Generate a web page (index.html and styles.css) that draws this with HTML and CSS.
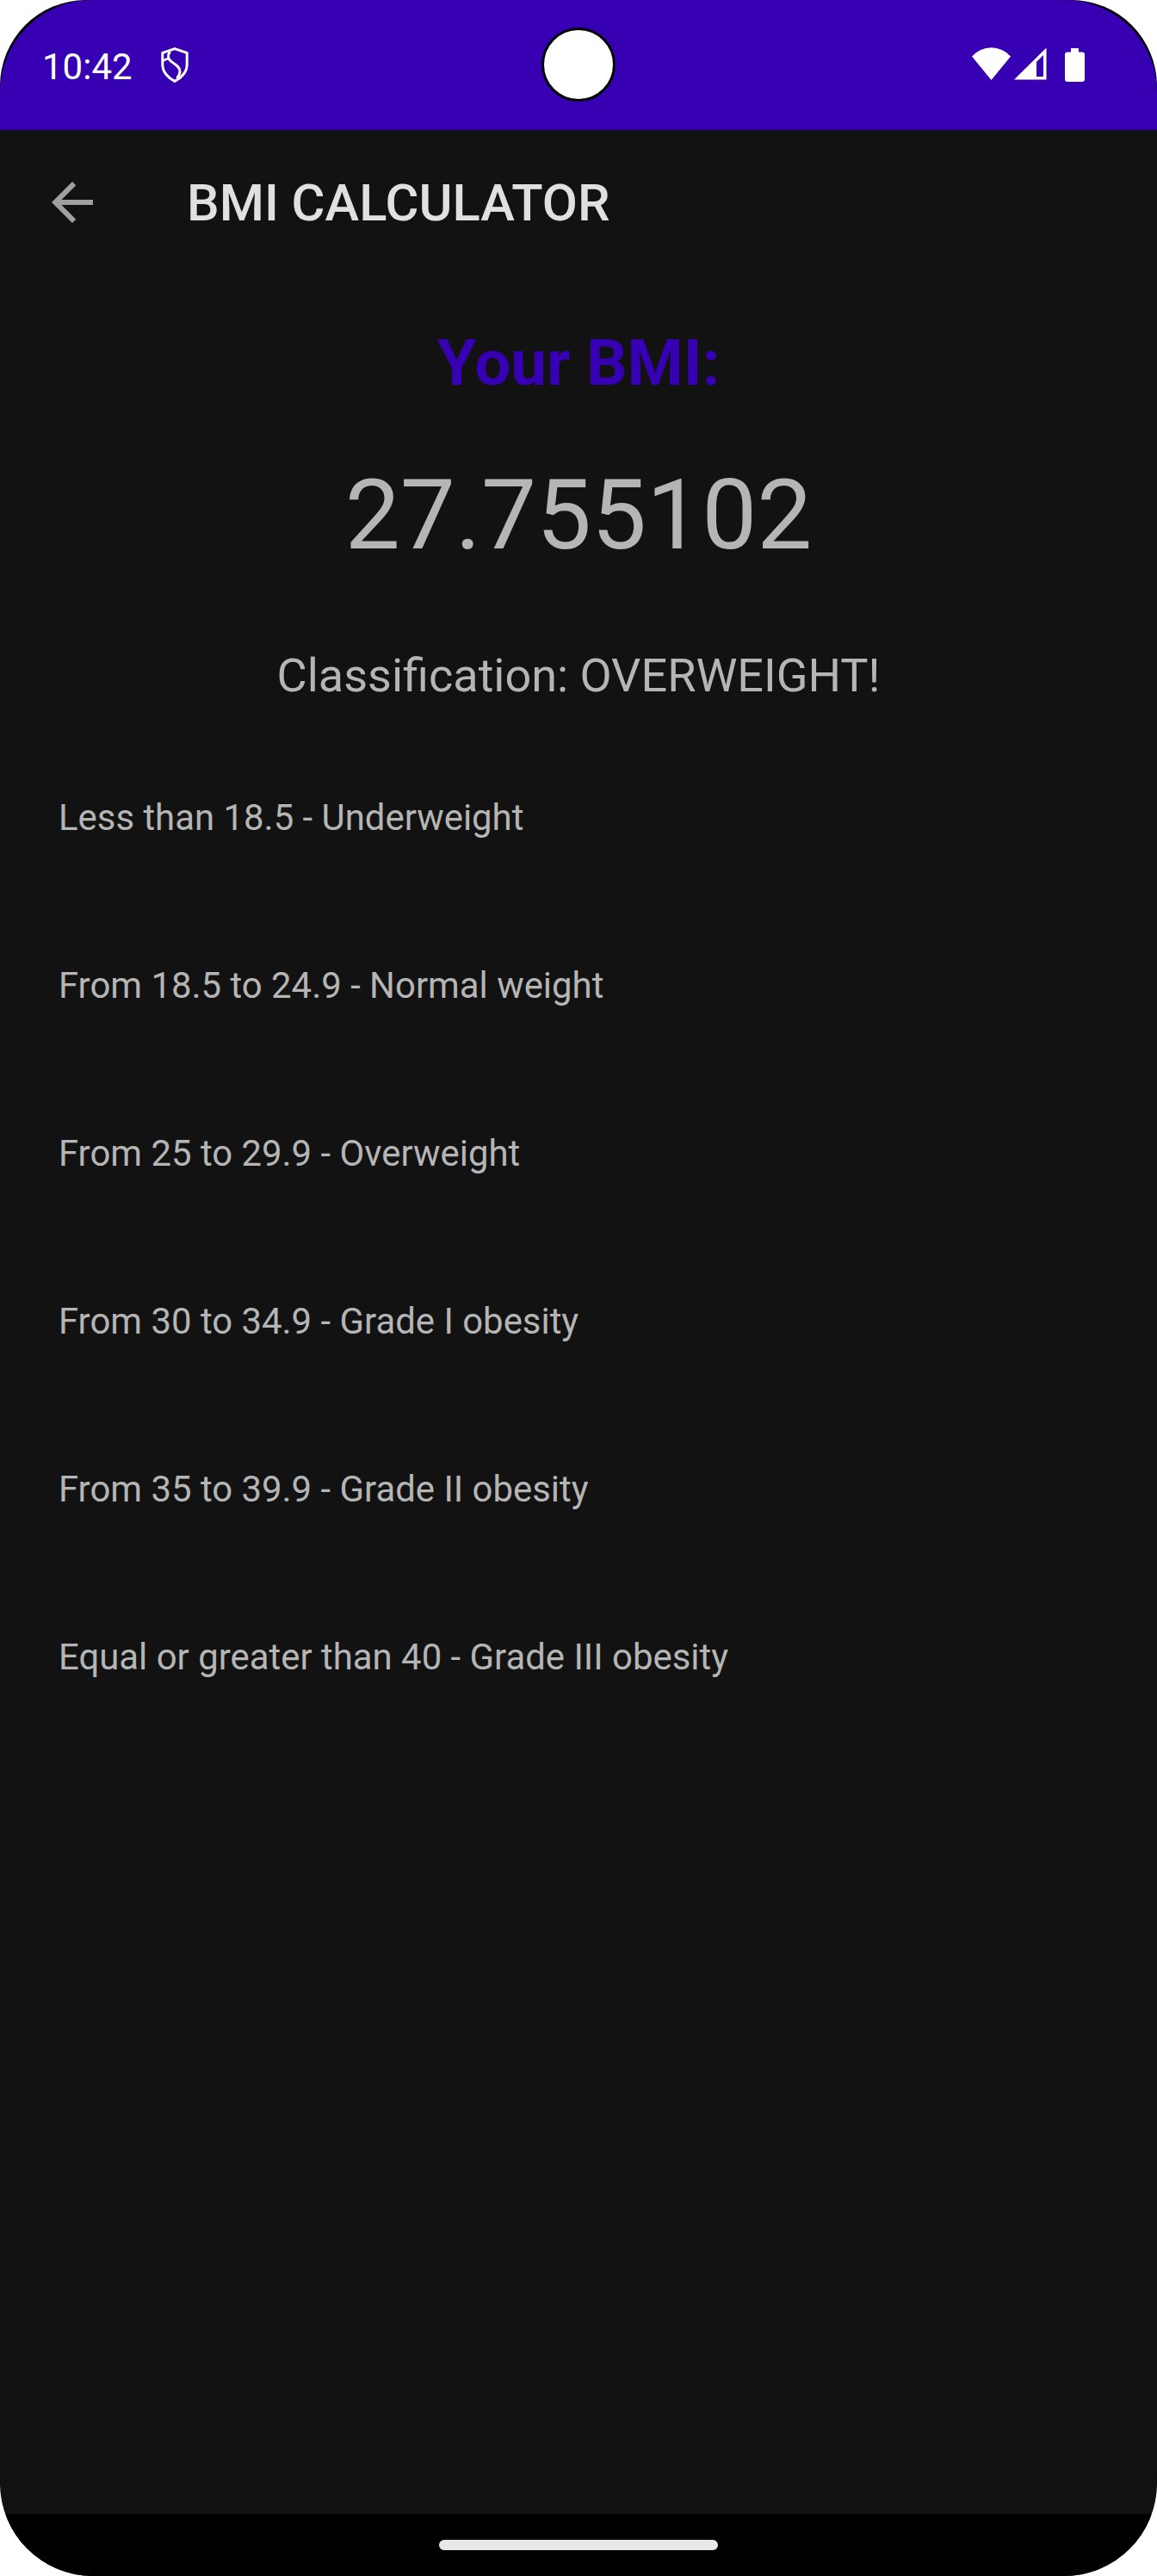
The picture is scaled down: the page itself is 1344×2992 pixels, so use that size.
FILE: index.html
```html
<!DOCTYPE html>
<html lang="en">
<head>
<meta charset="utf-8">
<title>BMI Calculator</title>
<link rel="stylesheet" href="styles.css">
</head>
<body>
<div class="phone">
  <header class="statusbar">
    <div class="status-left">
      <span class="time">10:42</span>
      <svg class="icon-shield" viewBox="0 0 32 41" width="32" height="41" aria-hidden="true">
        <path d="M16 1.600 L30.200 6.300 V20 C30.200 29 23 36 16 39.400 C9 36 1.800 29 1.800 20 V6.300 Z" fill="none" stroke="#fff" stroke-width="3" stroke-linejoin="round"/>
        <path d="M10.500 5 C7.500 9 8 13.500 12 16.500 C17 20 22 23 22 28 C22 31 20.500 33.500 18.500 36" fill="none" stroke="#fff" stroke-width="3"/>
        <path d="M2 16 C4 14.500 6.500 13.500 8.800 13" fill="none" stroke="#fff" stroke-width="2.600"/>
      </svg>
    </div>
    <div class="camera"></div>
    <div class="status-right">
      <svg class="icon-wifi" viewBox="0 0 45 38" width="45" height="38" aria-hidden="true">
        <path d="M0 10.500 A30 30 0 0 1 45 10.500 L22.500 38 Z" fill="#fff"/>
      </svg>
      <svg class="icon-signal" viewBox="0 0 38 38" width="38" height="38" aria-hidden="true">
        <path fill-rule="evenodd" d="M37.500 0.500 V37.500 H0 Z M34 9 L26 17 V34 H34 Z" fill="#fff"/>
      </svg>
      <svg class="icon-battery" viewBox="0 0 23 39" width="23" height="39" aria-hidden="true">
        <path d="M7 0 H16 V4.500 H20 Q23 4.500 23 7.500 V36 Q23 39 20 39 H3 Q0 39 0 36 V7.500 Q0 4.500 3 4.500 H7 Z" fill="#fff"/>
      </svg>
    </div>
  </header>
  <main class="screen">
    <div class="appbar">
      <svg class="icon-back" viewBox="0 0 24 24" width="72" height="72" aria-hidden="true">
        <path d="M20 11H7.830l5.590-5.590L12 4l-8 8 8 8 1.410-1.410L7.830 13H20v-2z" fill="#a0a0a0"/>
      </svg>
      <h1 class="title">BMI CALCULATOR</h1>
    </div>
    <section class="result">
      <h2 class="your-bmi">Your BMI:</h2>
      <p class="bmi-value">27.755102</p>
      <p class="classification">Classification: OVERWEIGHT!</p>
    </section>
    <ul class="ranges">
      <li>Less than 18.5 - Underweight</li>
      <li>From 18.5 to 24.9 - Normal weight</li>
      <li>From 25 to 29.9 - Overweight</li>
      <li>From 30 to 34.9 - Grade I obesity</li>
      <li>From 35 to 39.9 - Grade II obesity</li>
      <li>Equal or greater than 40 - Grade III obesity</li>
    </ul>
  </main>
  <footer class="navbar"><div class="pill"></div></footer>
</div>
</body>
</html>
```
FILE: styles.css
```css
* { box-sizing: border-box; }
html, body { margin: 0; padding: 0; background: #fff; }
body { width: 1344px; height: 2992px; overflow: hidden; font-family: Roboto, "Liberation Sans", sans-serif; }

.phone {
  width: 1344px;
  height: 2992px;
  display: flex;
  flex-direction: column;
  background: #000;
  border-radius: 100px 100px 108px 108px;
  overflow: hidden;
}

.statusbar {
  flex: 0 0 151px;
  position: relative;
  display: flex;
  justify-content: space-between;
  align-items: flex-start;
  background: #3700b3;
  border-radius: 107px 107px 0 0;
  color: #fff;
}
.status-left { display: flex; align-items: flex-start; padding: 55px 0 0 49px; }
.time { font-size: 42px; line-height: 42px; margin-top: 2px; width: 138px; }
.status-right { width: 215px; padding-top: 55px; display: flex; align-items: flex-start; }
.status-right svg { display: block; }
.icon-signal { margin-left: 4px; }
.icon-battery { margin-left: 21px; margin-top: 1px; }

.camera {
  position: absolute;
  left: 629px;
  top: 32px;
  width: 86px;
  height: 86px;
  border-radius: 50%;
  background: #fff;
  border: 3px solid #000;
}

.screen { flex: 1 1 auto; background: #121212; border-radius: 0 0 9px 9px / 0 0 50px 50px; }

.appbar { height: 168px; display: flex; align-items: center; padding-left: 48px; }
.title { margin: 2px 0 0 97px; font-size: 59.700px; line-height: 72px; font-weight: 500; color: #e0e0e0; }

.result { text-align: center; padding-top: 58px; }
.your-bmi { margin: 0; font-size: 74.500px; line-height: 90px; font-weight: 700; color: #3700b3; }
.bmi-value { margin: 64px 0 0; font-size: 114px; line-height: 134px; color: #b5b5b5; }
.classification { margin: 88px 0 0; font-size: 54px; line-height: 64px; color: #b5b5b5; }

.ranges { list-style: none; margin: 105px 0 0; padding: 0 0 0 68px; display: flex; flex-direction: column; gap: 139px; }
.ranges li { font-size: 41.900px; line-height: 56px; color: #b5b5b5; }

.navbar { flex: 0 0 72px; background: #000; padding-top: 30px; display: flex; justify-content: center; align-items: flex-start; }
.pill { width: 324px; height: 12px; border-radius: 6px; background: #e8e8e8; }
```
